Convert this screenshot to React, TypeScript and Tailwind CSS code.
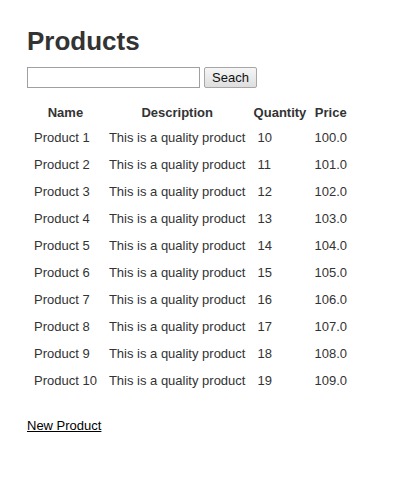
import React from "react";

const products = Array.from({ length: 10 }, (_, i) => ({
  name: `Product ${i + 1}`,
  description: "This is a quality product",
  quantity: 10 + i,
  price: (100 + i).toFixed(1),
}));

export default function App() {
  return (
    <div className="min-h-[481px] bg-white px-[27px] pt-[26px] text-[13px] text-[#333] font-['Liberation_Sans',Arial,sans-serif]">
      <h1 className="text-[26px] font-bold leading-[30px]">Products</h1>

      <form className="mt-[11px] flex items-center gap-[4px]" onSubmit={(e) => e.preventDefault()}>
        <input type="text" className="h-[21px] w-[173px] border border-[#a0a0a0] bg-white px-[2px] text-[13px] outline-none" />
        <button type="submit" className="h-[21px] w-[53px] rounded-[2px] border border-[#a6a6a6] bg-[linear-gradient(#f6f6f6,#dedede)] text-[13px] leading-none text-[#111]">
          Seach
        </button>
      </form>

      <table className="mt-[10px] border-separate border-spacing-[2px]">
        <thead>
          <tr>
            <th className="px-[5px] pt-[5px] pb-[3px] font-bold leading-[15px]">Name</th>
            <th className="px-[5px] pt-[5px] pb-[3px] font-bold leading-[15px]">Description</th>
            <th className="px-[5px] pt-[5px] pb-[3px] font-bold leading-[15px]">
              <div className="flex w-[45px] justify-center whitespace-nowrap">Quantity</div>
            </th>
            <th className="px-[5px] pt-[5px] pb-[3px] font-bold leading-[15px]">Price</th>
          </tr>
        </thead>
        <tbody>
          {products.map((p) => (
            <tr key={p.name}>
              <td className="p-[5px] leading-[15px]">{p.name}</td>
              <td className="p-[5px] leading-[15px]">{p.description}</td>
              <td className="p-[5px] leading-[15px]">{p.quantity}</td>
              <td className="p-[5px] leading-[15px]">{p.price}</td>
            </tr>
          ))}
        </tbody>
      </table>

      <div className="mt-[23px] leading-[15px]">
        <a href="#" className="text-black underline">New Product</a>
      </div>
    </div>
  );
}
